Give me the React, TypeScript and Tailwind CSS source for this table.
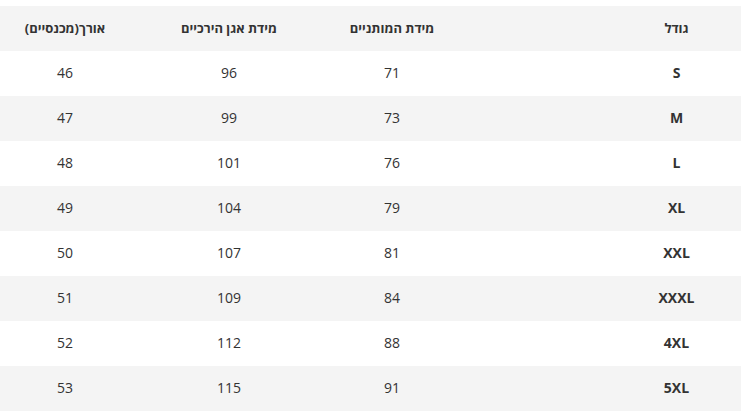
const headers = ["גודל", "", "מידת המותניים", "מידת אגן הירכיים", "אורך(מכנסיים)"]

const rows = [
  ["S", "71", "96", "46"],
  ["M", "73", "99", "47"],
  ["L", "76", "101", "48"],
  ["XL", "79", "104", "49"],
  ["XXL", "81", "107", "50"],
  ["XXXL", "84", "109", "51"],
  ["4XL", "88", "112", "52"],
  ["5XL", "91", "115", "53"],
]

const cols = "grid grid-cols-[129px_156px_128px_198px_130px]"

export default function App() {
  return (
    <div dir="rtl" className="w-[741px] bg-white pt-[6px] text-[#333] font-['Open_Sans','DejaVu_Sans',sans-serif]">
      <div className={`${cols} h-[45px] items-center bg-[#f4f4f4] text-[13px] font-bold`}>
        {headers.map((h, i) => (
          <div key={i} className="text-center">{h}</div>
        ))}
      </div>
      {rows.map((r, i) => (
        <div key={r[0]} className={`${cols} h-[45px] items-center pb-[3px] text-[14px] ${i % 2 === 1 ? "bg-[#f4f4f4]" : "bg-white"}`}>
          <div className="text-center font-bold">{r[0]}</div>
          <div />
          <div className="text-center">{r[1]}</div>
          <div className="text-center">{r[2]}</div>
          <div className="text-center">{r[3]}</div>
        </div>
      ))}
    </div>
  )
}
